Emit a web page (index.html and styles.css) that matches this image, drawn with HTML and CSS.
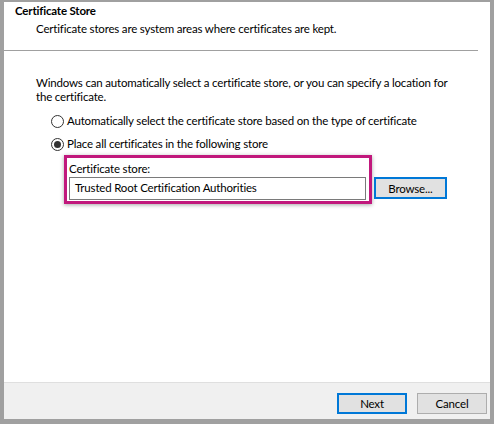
FILE: index.html
```html
<!DOCTYPE html>
<html>
<head>
<meta charset="utf-8">
<link rel="stylesheet" href="styles.css">
</head>
<body>
<div class="window">
  <div class="header">
    <div class="title">Certificate Store</div>
    <div class="subtitle">Certificate stores are system areas where certificates are kept.</div>
  </div>
  <div class="divider"></div>
  <div class="content">
    <p class="intro">Windows can automatically select a certificate store, or you can specify a location for<br>the certificate.</p>
    <div class="option first"><span class="radio"></span><span>Automatically select the certificate store based on the type of certificate</span></div>
    <div class="option second"><span class="radio checked"></span><span>Place all certificates in the following store</span></div>
    <div class="store-row">
      <div class="highlight">
        <div class="label">Certificate store:</div>
        <div class="textbox">Trusted Root Certification Authorities</div>
      </div>
      <div class="btn focus browse">Browse...</div>
    </div>
  </div>
  <div class="footer">
    <div class="btn focus">Next</div>
    <div class="btn">Cancel</div>
  </div>
</div>
</body>
</html>
```
FILE: styles.css
```css
html, body {
  margin: 0;
  padding: 0;
}
body {
  font-family: Lato, "Noto Sans", sans-serif;
  font-size: 11.5px;
  letter-spacing: -0.18px;
  color: #000;
  background: #a0a0a0;
}
.window {
  box-sizing: border-box;
  width: 494px;
  height: 424px;
  border-style: solid;
  border-color: #a0a0a0;
  border-width: 2px 4px 5px 4px;
  background: #fff;
  display: flex;
  flex-direction: column;
}
.header {
  height: 48px;
  padding: 1px 0 0 11px;
  box-sizing: border-box;
}
.title {
  font-weight: bold;
  line-height: 16px;
}
.subtitle {
  line-height: 16px;
  margin-top: 2px;
  padding-left: 21px;
}
.divider {
  height: 1px;
  background: #a0a0a0;
  margin-right: 12px;
}
.content {
  flex: 1;
  padding: 25px 0 0 32px;
}
.intro {
  margin: 0;
  line-height: 14px;
  white-space: nowrap;
}
.option {
  display: flex;
  align-items: center;
  line-height: 16px;
  margin-left: 15px;
  gap: 3px;
}
.option.first { margin-top: 9px; }
.option.second { margin-top: 7px; }
.radio {
  box-sizing: border-box;
  width: 13px;
  height: 13px;
  border: 1px solid #333;
  border-radius: 50%;
  background: #fff;
  display: flex;
  align-items: center;
  justify-content: center;
}
.radio.checked::after {
  content: "";
  width: 7px;
  height: 7px;
  border-radius: 50%;
  background: #333;
}
.store-row {
  display: flex;
  align-items: flex-end;
  gap: 2px;
  margin: 3px 0 0 28px;
}
.highlight {
  border: 3px solid #c1187c;
  padding: 3px 3px 1px 2px;
  box-shadow: 0 1px 4px rgba(0, 0, 0, 0.35);
}
.label {
  line-height: 16px;
}
.textbox {
  box-sizing: border-box;
  width: 297px;
  height: 23px;
  border: 1px solid #7a7a7a;
  padding-left: 5px;
  line-height: 20px;
  background: #fff;
}
.btn {
  box-sizing: border-box;
  width: 70px;
  height: 21px;
  background: #e1e1e1;
  border: 1px solid #adadad;
  display: flex;
  align-items: center;
  justify-content: center;
}
.btn.focus {
  border: 2px solid #0078d7;
}
.browse {
  width: 73px;
  height: 22px;
  margin-bottom: 5px;
}
.footer {
  height: 37px;
  box-sizing: border-box;
  background: #f0f0f0;
  border-top: 1px solid #dfdfdf;
  display: flex;
  justify-content: flex-end;
  gap: 10px;
  padding: 10px 3px 0 0;
}
```
